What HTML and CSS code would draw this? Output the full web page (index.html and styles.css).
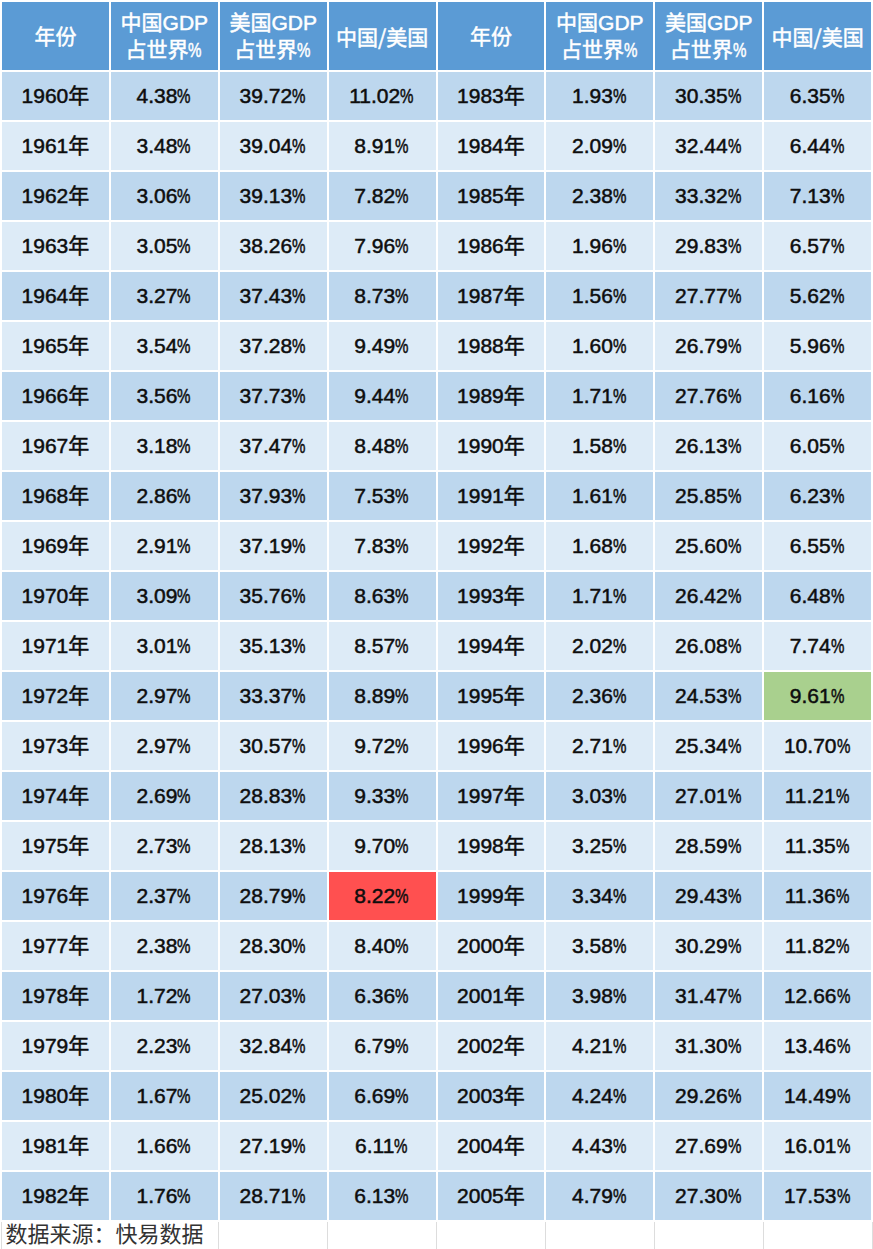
FILE: index.html
```html
<!DOCTYPE html>
<html lang="zh">
<head>
<meta charset="utf-8">
<link rel="stylesheet" href="styles.css">
</head>
<body>
<table class="grid">
<colgroup><col><col><col><col><col><col><col><col></colgroup>
<thead>
<tr class="head">
<th>年份</th><th>中国GDP<br>占世界<span class="pc">%</span></th><th>美国GDP<br>占世界<span class="pc">%</span></th><th class="cjk">中国/美国</th>
<th>年份</th><th>中国GDP<br>占世界<span class="pc">%</span></th><th>美国GDP<br>占世界<span class="pc">%</span></th><th class="cjk">中国/美国</th>
</tr>
</thead>
<tbody id="rows"></tbody>
<tfoot>
<tr class="foot"><td colspan="2" class="src">数据来源：快易数据</td><td></td><td></td><td></td><td></td><td></td><td></td></tr>
</tfoot>
</table>
<script>
var data = [
["1960","4.38","39.72","11.02","1983","1.93","30.35","6.35"],
["1961","3.48","39.04","8.91","1984","2.09","32.44","6.44"],
["1962","3.06","39.13","7.82","1985","2.38","33.32","7.13"],
["1963","3.05","38.26","7.96","1986","1.96","29.83","6.57"],
["1964","3.27","37.43","8.73","1987","1.56","27.77","5.62"],
["1965","3.54","37.28","9.49","1988","1.60","26.79","5.96"],
["1966","3.56","37.73","9.44","1989","1.71","27.76","6.16"],
["1967","3.18","37.47","8.48","1990","1.58","26.13","6.05"],
["1968","2.86","37.93","7.53","1991","1.61","25.85","6.23"],
["1969","2.91","37.19","7.83","1992","1.68","25.60","6.55"],
["1970","3.09","35.76","8.63","1993","1.71","26.42","6.48"],
["1971","3.01","35.13","8.57","1994","2.02","26.08","7.74"],
["1972","2.97","33.37","8.89","1995","2.36","24.53","9.61"],
["1973","2.97","30.57","9.72","1996","2.71","25.34","10.70"],
["1974","2.69","28.83","9.33","1997","3.03","27.01","11.21"],
["1975","2.73","28.13","9.70","1998","3.25","28.59","11.35"],
["1976","2.37","28.79","8.22","1999","3.34","29.43","11.36"],
["1977","2.38","28.30","8.40","2000","3.58","30.29","11.82"],
["1978","1.72","27.03","6.36","2001","3.98","31.47","12.66"],
["1979","2.23","32.84","6.79","2002","4.21","31.30","13.46"],
["1980","1.67","25.02","6.69","2003","4.24","29.26","14.49"],
["1981","1.66","27.19","6.11","2004","4.43","27.69","16.01"],
["1982","1.76","28.71","6.13","2005","4.79","27.30","17.53"]
];
var tb = document.getElementById("rows");
data.forEach(function (r, i) {
  var tr = document.createElement("tr");
  tr.className = i % 2 === 0 ? "dark" : "light";
  r.forEach(function (v, j) {
    var td = document.createElement("td");
    if (j === 0 || j === 4) {
      td.innerHTML = v + '<span class="cj">年</span>';
    } else {
      td.innerHTML = v + '<span class="pc">%</span>';
    }
    if (i === 16 && j === 3) td.className = "red";
    if (i === 12 && j === 7) td.className = "green";
    tr.appendChild(td);
  });
  tb.appendChild(tr);
});
</script>
</body>
</html>
```
FILE: styles.css
```css
html, body {
  margin: 0;
  padding: 0;
  background: #ffffff;
}
.grid {
  width: 873px;
  table-layout: fixed;
  border-collapse: collapse;
  font-family: "Liberation Sans", "Noto Sans CJK SC", sans-serif;
  font-size: 21px;
}
.grid th, .grid td {
  border: 2px solid #ffffff;
  text-align: center;
  vertical-align: middle;
  padding: 0;
  line-height: 24px;
}
.head {
  height: 70px;
}
.head th {
  background: #5b9bd5;
  color: #ffffff;
  font-weight: normal;
  -webkit-text-stroke: 0.5px #ffffff;
  font-size: 21px;
  line-height: 27px;
}
.head th.cjk {
  font-family: "Noto Sans CJK SC", sans-serif;
}
tbody tr {
  height: 50px;
}
tbody td {
  font-weight: normal;
  color: #0d0d0d;
  -webkit-text-stroke: 0.5px #0d0d0d;
}
.cj {
  vertical-align: top;
}
tr.dark td {
  background: #bdd7ee;
}
tr.light td {
  background: #ddebf7;
}
tr td.red {
  background: #ff5050;
}
tr td.green {
  background: #a9d08e;
}
.pc {
  display: inline-block;
  transform: scaleX(0.72);
  transform-origin: left center;
  margin-right: -4px;
}
.foot {
  height: 28px;
}
.foot td {
  border: 1px solid #dddddd;
  border-top: 2px solid #ffffff;
  background: #ffffff;
}
.foot td.src {
  text-align: left;
  font-weight: normal;
  color: #333333;
  padding-left: 4px;
  white-space: nowrap;
  font-size: 22px;
  line-height: 26px;
}
```
